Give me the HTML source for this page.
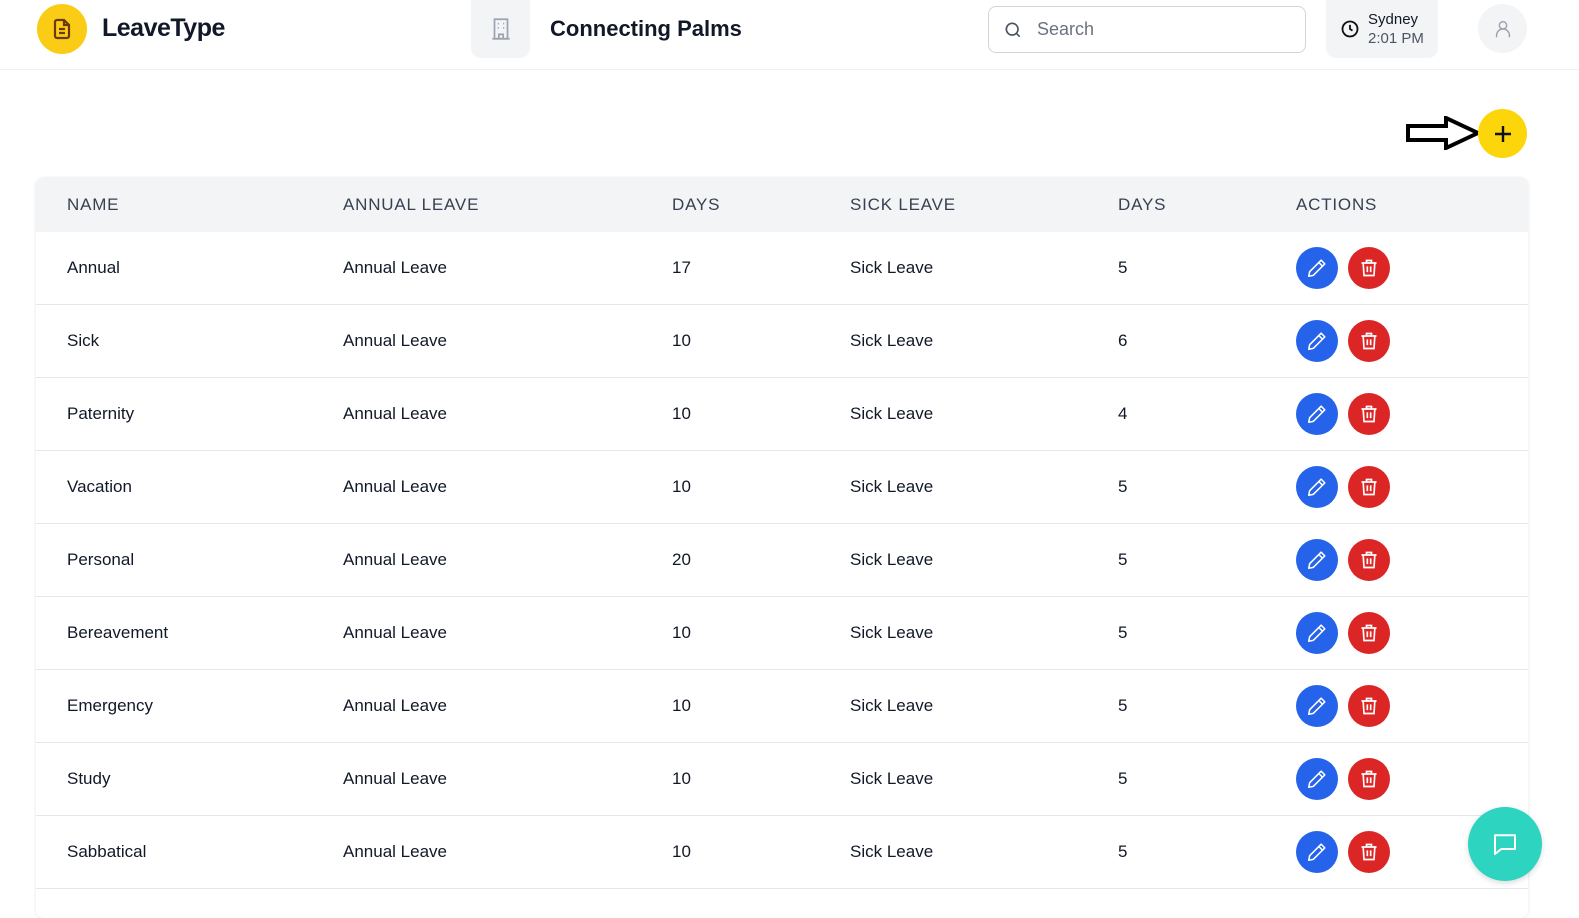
<!DOCTYPE html>
<html><head><meta charset="utf-8"><style>
*{box-sizing:border-box;margin:0;padding:0}
body{width:1579px;height:906px;overflow:hidden;background:#fff;font-family:"Liberation Sans",sans-serif;color:#111827;position:relative}
.top{position:absolute;left:0;top:0;width:1579px;height:70px;border-bottom:1px solid #eef0f2;background:#fff}
.abs{position:absolute}
.logo{left:37px;top:4px;width:50px;height:50px;border-radius:50%;background:#facc15;display:flex;align-items:center;justify-content:center}
.title{left:102px;top:14px;font-size:25px;font-weight:bold;letter-spacing:-0.5px}
.bld{left:471px;top:0;width:59px;height:58px;border-radius:0 0 10px 10px;background:#f3f4f6;display:flex;align-items:center;justify-content:center}
.org{left:550px;top:16px;font-size:22px;font-weight:bold}
.search{left:988px;top:6px;width:318px;height:47px;border:1px solid #d1d5db;border-radius:8px;display:flex;align-items:center;padding-left:14px;color:#6b7280;font-size:18px;gap:14px}
.clock{left:1326px;top:0;width:112px;height:58px;border-radius:0 0 10px 10px;background:#f3f4f6;display:flex;align-items:center;padding-left:14px;gap:8px}
.avatar{left:1478px;top:4px;width:49px;height:49px;border-radius:50%;background:#f3f4f6;display:flex;align-items:center;justify-content:center}
.add{left:1478px;top:109px;width:49px;height:49px;border-radius:50%;background:#fcd60a;display:flex;align-items:center;justify-content:center}
.card{left:36px;top:178px;width:1492px;height:740px;border-radius:8px;box-shadow:0 0 3px rgba(0,0,0,.12);overflow:hidden;background:#fff}
.hd{height:54px;background:#f3f4f6;position:relative;font-size:17px;color:#374151;letter-spacing:.8px}
.row{height:73px;border-bottom:1px solid #e5e7eb;position:relative;font-size:17px}
.c{position:absolute;top:50%;transform:translateY(-50%)}
.btn{position:absolute;top:50%;margin-top:-21px;width:42px;height:42px;border-radius:50%;display:flex;align-items:center;justify-content:center}
.chat{left:1468px;top:807px;width:74px;height:74px;border-radius:50%;background:#2dd4bf;display:flex;align-items:center;justify-content:center;box-shadow:0 2px 6px rgba(0,0,0,.15)}
</style></head><body>
<div class="top">
<div class="abs logo"><svg width="24" height="24" viewBox="0 0 24 24" fill="none" stroke="#6b3a0a" stroke-width="2.2"><path d="M14 3H7a2 2 0 0 0-2 2v14a2 2 0 0 0 2 2h10a2 2 0 0 0 2-2V8z" fill="#facc15"/><path d="M14 3v5h5M9 12h6M9 16h6"/></svg></div>
<div class="abs title">LeaveType</div>
<div class="abs bld"><svg width="26" height="26" viewBox="0 0 24 24" fill="none" stroke="#9ca3af" stroke-width="1.6"><rect x="6" y="3" width="12" height="18"/><path d="M4 21h16M9 7h1M14 7h1M9 11h1M14 11h1M10 21v-4h4v4"/></svg></div>
<div class="abs org">Connecting Palms</div>
<div class="abs search"><svg width="20" height="20" viewBox="0 0 24 24" fill="none" stroke="#4b5563" stroke-width="2"><circle cx="11" cy="11" r="7"/><path d="M20 20l-4-4"/></svg>Search</div>
<div class="abs clock"><svg width="20" height="20" viewBox="0 0 24 24" fill="none" stroke="#111" stroke-width="2.2"><circle cx="12" cy="12" r="9"/><path d="M12 7v5l3 2"/></svg><div style="line-height:19px"><div style="font-size:15px">Sydney</div><div style="font-size:15px;color:#4b5563">2:01 PM</div></div></div>
<div class="abs avatar"><svg width="22" height="22" viewBox="0 0 24 24" fill="none" stroke="#9ca3af" stroke-width="1.6"><circle cx="12" cy="8" r="4"/><path d="M5 21v-2a6 6 0 0 1 14 0v2"/></svg></div>
</div>
<svg class="abs" style="left:1405px;top:116px" width="76" height="34" viewBox="0 0 76 34"><path d="M3 10h38V2l32 15-32 15v-8H3z" fill="#fff" stroke="#000" stroke-width="4" stroke-linejoin="miter"/></svg>
<div class="abs add"><svg width="20" height="20" viewBox="0 0 20 20" stroke="#111" stroke-width="2.4"><path d="M10 2v16M2 10h16"/></svg></div>
<div class="abs card">
<div class="hd"><span class="c" style="left:31px">NAME</span><span class="c" style="left:307px">ANNUAL LEAVE</span><span class="c" style="left:636px">DAYS</span><span class="c" style="left:814px">SICK LEAVE</span><span class="c" style="left:1082px">DAYS</span><span class="c" style="left:1260px">ACTIONS</span></div>
<div id="rows"></div>
</div>
<div class="abs chat"><svg width="30" height="30" viewBox="0 0 24 24" fill="none" stroke="#fff" stroke-width="1.6"><path d="M4 5h16v11H9l-5 4z" stroke-linejoin="round"/></svg></div>
<script>
var d=[["Annual",17,5],["Sick",10,6],["Paternity",10,4],["Vacation",10,5],["Personal",20,5],["Bereavement",10,5],["Emergency",10,5],["Study",10,5],["Sabbatical",10,5]];
var pen='<svg width="22" height="22" viewBox="0 0 24 24" fill="none" stroke="#fff" stroke-width="1.7" stroke-linejoin="round"><path d="M16.5 3.5l4 4L8 20l-5 1 1-5z"/><path d="M14 6l4 4"/></svg>';
var bin='<svg width="20" height="20" viewBox="0 0 24 24" fill="none" stroke="#fff" stroke-width="2"><path d="M3 6h18M9 6V3h6v3M5 6l1 15h12l1-15M10 10v7M14 10v7"/></svg>';
var h='';d.forEach(function(r){h+='<div class="row"><span class="c" style="left:31px">'+r[0]+'</span><span class="c" style="left:307px">Annual Leave</span><span class="c" style="left:636px">'+r[1]+'</span><span class="c" style="left:814px">Sick Leave</span><span class="c" style="left:1082px">'+r[2]+'</span><div class="btn" style="left:1260px;background:#2563eb">'+pen+'</div><div class="btn" style="left:1312px;background:#dc2626">'+bin+'</div></div>'});
document.getElementById('rows').innerHTML=h;
</script>
</body></html>
